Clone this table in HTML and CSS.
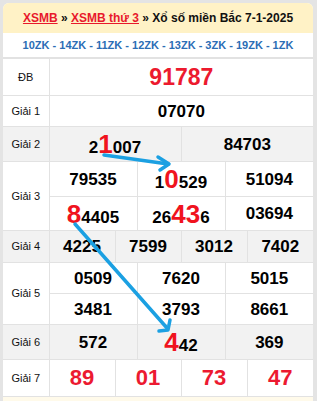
FILE: index.html
```html
<!DOCTYPE html>
<html>
<head>
<meta charset="utf-8">
<link rel="stylesheet" href="styles.css">
</head>
<body>
<div class="card">
  <div class="head"><span class="crumbs"><a href="#">XSMB</a> » <a href="#">XSMB thứ 3</a> » Xổ số miền Bắc 7-1-2025</span></div>
  <div class="codes">10ZK - 14ZK - 11ZK - 12ZK - 13ZK - 3ZK - 19ZK - 1ZK</div>
  <table class="kq">
    <colgroup>
      <col class="c-lbl">
      <col><col><col><col><col><col><col><col><col><col><col><col>
    </colgroup>
    <tr class="r-db"><td class="lbl">ĐB</td><td colspan="12" class="db">91787</td></tr>
    <tr class="r-g1"><td class="lbl">Giải 1</td><td colspan="12">07070</td></tr>
    <tr class="r-g2 alt"><td class="lbl">Giải 2</td><td colspan="6">2<span class="hl">1</span>007</td><td colspan="6">84703</td></tr>
    <tr class="r-g3a"><td class="lbl" rowspan="2">Giải 3</td><td colspan="4">79535</td><td colspan="4">1<span class="hl">0</span>529</td><td colspan="4">51094</td></tr>
    <tr class="r-g3b"><td colspan="4"><span class="hl">8</span>4405</td><td colspan="4">26<span class="hl">43</span>6</td><td colspan="4">03694</td></tr>
    <tr class="r-g4 alt"><td class="lbl">Giải 4</td><td colspan="3">4225</td><td colspan="3">7599</td><td colspan="3">3012</td><td colspan="3">7402</td></tr>
    <tr class="r-g5a"><td class="lbl" rowspan="2">Giải 5</td><td colspan="4">0509</td><td colspan="4">7620</td><td colspan="4">5015</td></tr>
    <tr class="r-g5b"><td colspan="4">3481</td><td colspan="4">3793</td><td colspan="4">8661</td></tr>
    <tr class="r-g6 alt"><td class="lbl">Giải 6</td><td colspan="4">572</td><td colspan="4"><span class="hl">4</span>42</td><td colspan="4">369</td></tr>
    <tr class="r-g7"><td class="lbl">Giải 7</td><td colspan="3" class="g7">89</td><td colspan="3" class="g7">01</td><td colspan="3" class="g7">73</td><td colspan="3" class="g7">47</td></tr>
  </table>
  <div class="foot"></div>
  <svg class="arrows" width="317" height="401" viewBox="0 0 317 401">
    <g fill="none" stroke="#1ba0e2" stroke-width="3.5" stroke-linecap="round" stroke-linejoin="round">
      <path d="M104 155 L168 164"/>
      <path d="M158 157 L169 164 L160 170"/>
      <path d="M75 224 L167 328"/>
      <path d="M159 331 L168 330 L170 320"/>
    </g>
  </svg>
</div>
</body>
</html>
```
FILE: styles.css
```css
html, body {
  margin: 0;
  padding: 0;
}
body {
  background: #e4e4e4;
  padding: 3px 4px 0 3px;
  font-family: "Liberation Sans", Arial, sans-serif;
  height: 401px;
  box-sizing: border-box;
  overflow: hidden;
}
.card {
  position: relative;
  width: 310px;
  background: #fff;
  border-radius: 6px 6px 0 0;
  overflow: hidden;
}
.head {
  height: 30px;
  background: #fff2c6;
  display: flex;
  align-items: center;
  justify-content: center;
  font-size: 12px;
  font-weight: bold;
  color: #111;
  white-space: nowrap;
}
.head a {
  color: #e8192c;
  text-decoration: underline;
}
.codes {
  height: 25px;
  display: flex;
  align-items: center;
  justify-content: center;
  font-size: 11px;
  font-weight: bold;
  color: #2b6db5;
  white-space: nowrap;
  border-bottom: 1px solid #e2e2e2;
  box-sizing: border-box;
}
.kq {
  width: 310px;
  table-layout: fixed;
  border-collapse: collapse;
}
.kq col {
  width: 22px;
}
.kq col.c-lbl {
  width: 46px;
}
.kq td {
  border: 1px solid #e2e2e2;
  text-align: center;
  vertical-align: middle;
  padding: 0;
  font-size: 17px;
  font-weight: bold;
  color: #000;
  line-height: 1;
  white-space: nowrap;
}
.kq td.lbl {
  font-size: 11px;
  font-weight: normal;
  color: #111;
  border-left: none;
}
.kq tr td:last-child {
  border-right: none;
}
.kq tr.alt td {
  background: #f2f2f2;
}
.kq .db {
  font-size: 23px;
  color: #ec1a2e;
}
.kq .g7 {
  font-size: 22px;
  color: #ec1a30;
}
.hl {
  font-size: 26px;
  color: #f0131e;
}
.r-db td { height: 36px; }
.r-g1 td { height: 30px; }
.r-g2 td { height: 34px; }
.r-g3a td { height: 34px; }
.r-g3b td { height: 33px; }
.r-g4 td { height: 31px; }
.r-g5a td { height: 30px; }
.r-g5b td { height: 30px; }
.r-g6 td { height: 34px; }
.r-g7 td { height: 36px; }
.foot {
  height: 20px;
  background: #fffaea;
}
.arrows {
  position: absolute;
  left: -3px;
  top: -3px;
  pointer-events: none;
}
```
